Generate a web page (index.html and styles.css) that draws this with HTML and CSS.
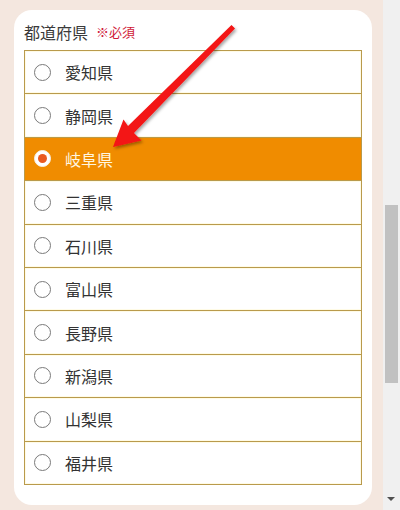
FILE: index.html
```html
<!DOCTYPE html>
<html lang="ja">
<head>
<meta charset="utf-8">
<link rel="stylesheet" href="styles.css">
</head>
<body>
<div class="page">
  <main class="main">
    <section class="card">
      <div class="label">都道府県<span class="req">※必須</span></div>
      <ul class="list">
        <li class="opt"><span class="radio"></span><span class="name">愛知県</span></li>
        <li class="opt"><span class="radio"></span><span class="name">静岡県</span></li>
        <li class="opt sel"><span class="radio"></span><span class="name">岐阜県</span></li>
        <li class="opt"><span class="radio"></span><span class="name">三重県</span></li>
        <li class="opt"><span class="radio"></span><span class="name">石川県</span></li>
        <li class="opt"><span class="radio"></span><span class="name">富山県</span></li>
        <li class="opt"><span class="radio"></span><span class="name">長野県</span></li>
        <li class="opt"><span class="radio"></span><span class="name">新潟県</span></li>
        <li class="opt"><span class="radio"></span><span class="name">山梨県</span></li>
        <li class="opt"><span class="radio"></span><span class="name">福井県</span></li>
      </ul>
    </section>
    <svg class="arrow" width="400" height="510" viewBox="0 0 400 510">
      <defs>
        <filter id="sh" x="-20%" y="-20%" width="140%" height="140%">
          <feDropShadow dx="1.5" dy="2" stdDeviation="1.5" flood-color="#000" flood-opacity="0.35"/>
        </filter>
      </defs>
      <polygon filter="url(#sh)" fill="#f31414" points="113,147 123.5,119.5 128,126 231.5,25 235,28.5 134,133 141.5,140.5"/>
    </svg>
  </main>
  <aside class="scrollbar">
    <div class="thumb"></div>
    <div class="down"></div>
  </aside>
</div>
</body>
</html>
```

FILE: styles.css
```css
html, body {
  margin: 0;
  padding: 0;
}
body {
  width: 400px;
  height: 510px;
  overflow: hidden;
  font-family: "Noto Sans CJK JP", "Noto Sans", sans-serif;
  color: #333;
}
.page {
  display: flex;
  width: 400px;
  height: 510px;
}
.main {
  position: relative;
  width: 383px;
  background: #f4e7df;
  padding: 10px 11px 5px 14px;
  box-sizing: border-box;
}
.card {
  background: #fff;
  border-radius: 18px;
  padding: 12px 10px 19px 10px;
  height: 495px;
  box-sizing: border-box;
}
.label {
  font-size: 16px;
  line-height: 20px;
  height: 20px;
  margin-bottom: 8px;
  color: #3a3a3a;
  display: flex;
  align-items: center;
}
.req {
  font-size: 13px;
  color: #d01838;
  margin-left: 8px;
}
.list {
  list-style: none;
  margin: 0;
  padding: 0;
  border: 1px solid #b99a4c;
  border-top: none;
}
.opt {
  box-sizing: border-box;
  height: 43.4px;
  border-top: 1px solid #b99a4c;
  display: flex;
  align-items: center;
  padding-left: 9px;
  box-shadow: inset 0 0 0 1px #fffbe6;
}
.radio {
  width: 15px;
  height: 15px;
  border: 1px solid #7a7a7a;
  border-radius: 50%;
  background: #fff;
  flex: none;
  position: relative;
}
.name {
  margin-left: 14px;
  font-size: 16px;
  line-height: 20px;
  color: #333;
}
.sel {
  background: #f08c00;
  box-shadow: none;
}
.sel .name {
  color: #fff6e0;
}
.sel .radio {
  border-color: #f6efe6;
  border-width: 1.5px;
}
.sel .radio::after {
  content: "";
  position: absolute;
  left: 3px;
  top: 3px;
  width: 9px;
  height: 9px;
  border-radius: 50%;
  background: #ea5a20;
}
.arrow {
  position: absolute;
  left: 0;
  top: 0;
  pointer-events: none;
}
.scrollbar {
  position: relative;
  width: 17px;
  height: 510px;
  background: #f0f0f0;
}
.thumb {
  position: absolute;
  left: 2px;
  top: 205px;
  width: 13px;
  height: 178px;
  background: #c1c1c1;
}
.down {
  position: absolute;
  left: 4px;
  top: 497px;
  width: 0;
  height: 0;
  border-left: 4px solid transparent;
  border-right: 4px solid transparent;
  border-top: 4px solid #505050;
}
```
